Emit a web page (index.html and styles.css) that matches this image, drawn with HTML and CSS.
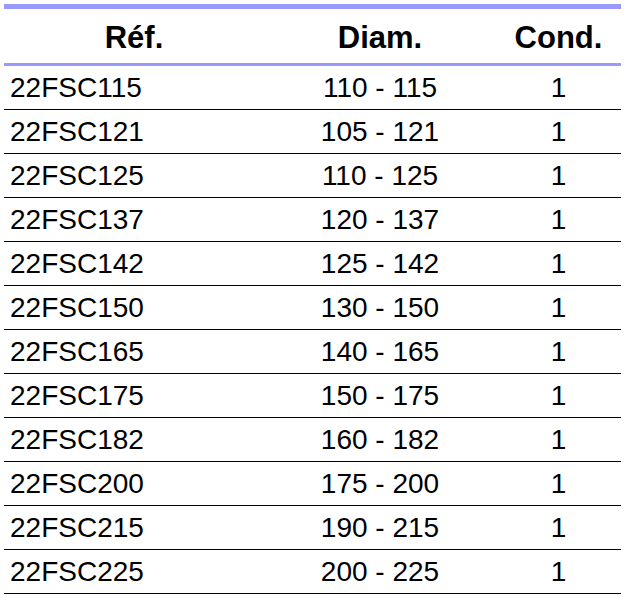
FILE: index.html
```html
<!DOCTYPE html>
<html lang="fr">
<head>
<meta charset="utf-8">
<title>Tableau</title>
<link rel="stylesheet" href="styles.css">
</head>
<body>
<div class="table">
  <div class="head">
    <div class="c1 h">Réf.</div>
    <div class="c2 h">Diam.</div>
    <div class="c3 h">Cond.</div>
  </div>
  <div class="row"><div class="c1">22FSC115</div><div class="c2">110 - 115</div><div class="c3">1</div></div>
  <div class="row"><div class="c1">22FSC121</div><div class="c2">105 - 121</div><div class="c3">1</div></div>
  <div class="row"><div class="c1">22FSC125</div><div class="c2">110 - 125</div><div class="c3">1</div></div>
  <div class="row"><div class="c1">22FSC137</div><div class="c2">120 - 137</div><div class="c3">1</div></div>
  <div class="row"><div class="c1">22FSC142</div><div class="c2">125 - 142</div><div class="c3">1</div></div>
  <div class="row"><div class="c1">22FSC150</div><div class="c2">130 - 150</div><div class="c3">1</div></div>
  <div class="row"><div class="c1">22FSC165</div><div class="c2">140 - 165</div><div class="c3">1</div></div>
  <div class="row"><div class="c1">22FSC175</div><div class="c2">150 - 175</div><div class="c3">1</div></div>
  <div class="row"><div class="c1">22FSC182</div><div class="c2">160 - 182</div><div class="c3">1</div></div>
  <div class="row"><div class="c1">22FSC200</div><div class="c2">175 - 200</div><div class="c3">1</div></div>
  <div class="row"><div class="c1">22FSC215</div><div class="c2">190 - 215</div><div class="c3">1</div></div>
  <div class="row"><div class="c1">22FSC225</div><div class="c2">200 - 225</div><div class="c3">1</div></div>
</div>
</body>
</html>
```
FILE: styles.css
```css
html, body {
  margin: 0;
  padding: 0;
  background: #ffffff;
}
body {
  font-family: "Liberation Sans", Arial, sans-serif;
  font-size: 28px;
  color: #000000;
}
.table {
  margin: 4px 0 0 4px;
  width: 617px;
  border-top: 5px solid #9999ff;
}
.head,
.row {
  display: grid;
  grid-template-columns: 260px 232px 125px;
  align-items: center;
}
.head {
  height: 54px;
  border-bottom: 3px solid #9999ff;
}
.row {
  height: 43px;
  border-bottom: 1px solid #000000;
}
.h {
  font-size: 31px;
  font-weight: bold;
  text-align: center;
  padding-top: 4px;
}
.c1 {
  padding-left: 6px;
}
.h.c1 {
  padding-left: 0;
}
.c2,
.c3 {
  text-align: center;
}
```
